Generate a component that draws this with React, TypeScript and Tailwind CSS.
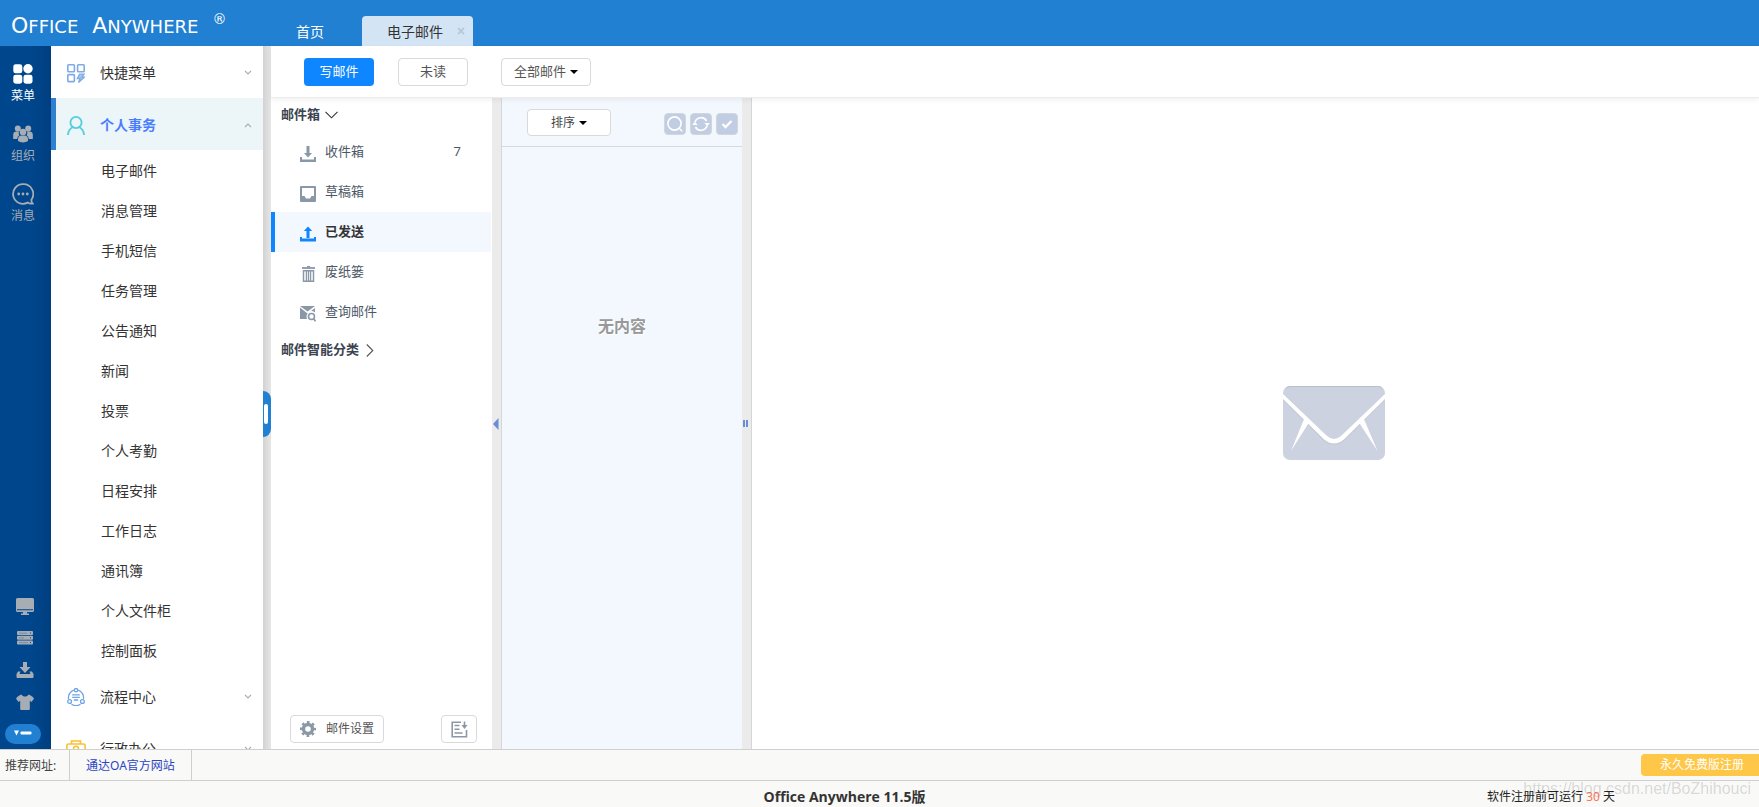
import type { ReactNode } from "react";
import clsx from "clsx";

const SUB_MENU = [
  "电子邮件",
  "消息管理",
  "手机短信",
  "任务管理",
  "公告通知",
  "新闻",
  "投票",
  "个人考勤",
  "日程安排",
  "工作日志",
  "通讯簿",
  "个人文件柜",
  "控制面板",
];

/* ---------- icons ---------- */

function GridIcon() {
  return (
    <svg width="20" height="20" viewBox="0 0 20 20" fill="currentColor">
      <rect x="0.3" y="0.3" width="9" height="9" rx="2.4" />
      <circle cx="15" cy="4.8" r="4.7" />
      <rect x="0.3" y="10.7" width="9" height="9" rx="2.4" />
      <rect x="10.5" y="10.7" width="9" height="9" rx="2.4" />
    </svg>
  );
}

function PeopleIcon() {
  return (
    <svg width="20" height="18" viewBox="0 0 20 18" fill="currentColor">
      <circle cx="4.8" cy="3.6" r="3" />
      <circle cx="15.2" cy="3.6" r="3" />
      <path d="M0.2 14V9.600C0.2 7.800 1.600 6.600 3.400 6.600H6c-.6 1.300-.3 2.600.4 3.600C5 11 4.400 12 4.300 14z" />
      <path d="M19.800 14V9.600C19.800 7.800 18.400 6.600 16.600 6.600H14c.6 1.300.3 2.600-.4 3.600 1.400.8 2 1.800 2.100 3.800z" />
      <circle cx="10" cy="7" r="3.300" />
      <path d="M5 16v-1.800c0-2.200 1.600-3.600 3.400-3.600h3.200c1.800 0 3.400 1.400 3.400 3.600V16c-2.600 1.900-7.400 1.900-10 0z" />
    </svg>
  );
}

function ChatIcon() {
  return (
    <svg width="22" height="22" viewBox="0 0 22 22" fill="none" stroke="currentColor" strokeWidth="1.800">
      <path d="M11 1.200a9.800 9.800 0 1 0 4.600 18.400c1.400.9 3.200 1.200 5 .9-.9-1-1.300-2.200-1.200-3.800A9.800 9.800 0 0 0 11 1.200z" />
      <g fill="currentColor" stroke="none">
        <circle cx="6.700" cy="11" r="1.400" />
        <circle cx="11" cy="11" r="1.400" />
        <circle cx="15.300" cy="11" r="1.400" />
      </g>
    </svg>
  );
}

function DesktopIcon() {
  return (
    <svg width="18" height="17" viewBox="0 0 18 17" fill="currentColor">
      <path fillRule="evenodd" d="M1.500 0h15A1.500 1.500 0 0 1 18 1.500v11a1.500 1.500 0 0 1-1.500 1.500h-15A1.500 1.500 0 0 1 0 12.500v-11A1.500 1.500 0 0 1 1.500 0zM1 11.300v1h16v-1z" />
      <path d="M7 14h4v1.500h2V17H5v-1.500h2z" />
    </svg>
  );
}

function ServerIcon() {
  return (
    <svg width="16" height="14" viewBox="0 0 16 14">
      <g fill="currentColor">
        <rect width="16" height="4" rx="1" />
        <rect y="4.800" width="16" height="4" rx="1" />
        <rect y="9.600" width="16" height="4" rx="1" />
      </g>
      <path d="M2 2.200h8M2 6.900h5M2 11.700h9" stroke="#00458a" strokeWidth="0.600" opacity="0.500" />
      <path d="M13 2h1M13 6.800h1M13 11.600h1" stroke="#00458a" strokeWidth="1" />
    </svg>
  );
}

function TrayDownIcon() {
  return (
    <svg width="18" height="16" viewBox="0 0 18 16" fill="currentColor">
      <path d="M7 0h4v5h3.500L9 11 3.500 5H7z" />
      <path d="M0.500 12L2 9.500h2.500L3.500 12h11l-1-2.500H16l1.500 2.500V15a1 1 0 0 1-1 1h-15a1 1 0 0 1-1-1z" />
    </svg>
  );
}

function ShirtIcon() {
  return (
    <svg width="18" height="16" viewBox="0 0 18 16" fill="currentColor">
      <path d="M5.500 0.500C6.300 2 7.500 2.600 9 2.600s2.700-.6 3.500-2.100c1.700.3 3.500 1.500 5.500 4L15.600 8l-1.800-1.300V15a1 1 0 0 1-1 1H5.200a1 1 0 0 1-1-1V6.700L2.400 8 0 4.500c2-2.500 3.800-3.700 5.500-4z" />
    </svg>
  );
}

function QuickMenuIcon() {
  return (
    <svg width="18" height="19" viewBox="0 0 18 19" fill="none" stroke="#7fabe3" strokeWidth="1.600">
      <rect x="0.800" y="0.800" width="6.600" height="7" rx="0.800" />
      <rect x="10.600" y="0.800" width="6.600" height="7" rx="0.800" />
      <rect x="0.800" y="10.600" width="6.600" height="7" rx="0.800" />
      <path d="M12.500 10.200l-2.200 4.300h2.800l-1.600 4 6-5.400h-2.600l2.200-2.900z" fill="#a9c8ef" strokeWidth="1.300" />
    </svg>
  );
}

function PersonIcon() {
  return (
    <svg width="18" height="19" viewBox="0 0 18 19" fill="none" stroke="#55cddd" strokeWidth="1.800">
      <circle cx="9" cy="6.500" r="5.600" />
      <path d="M0.900 19c.3-4 2.300-6.800 5.500-8M17.100 19c-.3-4-2.300-6.800-5.500-8" />
    </svg>
  );
}

function FlowIcon() {
  return (
    <svg width="18" height="18" viewBox="0 0 18 18" fill="none" stroke="#6fa3e3" strokeWidth="1.300">
      <path d="M6.800 2.200A7.600 7.600 0 0 0 1.600 11M11.200 2.200A7.600 7.600 0 0 1 16.400 11M4.500 16.200a8.500 8.500 0 0 0 9 0" />
      <circle cx="9" cy="2.200" r="1.700" />
      <circle cx="2.600" cy="13.500" r="1.900" />
      <circle cx="15.400" cy="13.500" r="1.900" />
      <path d="M5.200 6.800h7.600M5.200 9.300h7.600M6.800 12h4.400" />
    </svg>
  );
}

function CaseIcon() {
  return (
    <svg width="20" height="18" viewBox="0 0 20 18" fill="none" stroke="#fcc02f" strokeWidth="1.600">
      <rect x="0.900" y="4" width="18.200" height="13" rx="1.500" />
      <path d="M5.500 4V1h9v3" />
      <circle cx="10" cy="8.600" r="2.400" />
    </svg>
  );
}

function InboxDownIcon() {
  return (
    <svg width="16" height="16" viewBox="0 0 16 16" fill="currentColor">
      <path d="M6.500 0h3v7h2.500l-4 4.500L4 7h2.500z" />
      <path d="M0 11h2v2.500h12V11h2v5H0z" />
    </svg>
  );
}

function DraftIcon() {
  return (
    <svg width="16" height="16" viewBox="0 0 16 16" fill="currentColor">
      <path fillRule="evenodd" d="M1 0h14a1 1 0 0 1 1 1v14a1 1 0 0 1-1 1H1a1 1 0 0 1-1-1V1a1 1 0 0 1 1-1zM2 2v8h2.500l1.500 2.500h4L11.500 10H14V2z" />
    </svg>
  );
}

function SentIcon() {
  return (
    <svg width="16" height="16" viewBox="0 0 16 16" fill="currentColor">
      <path d="M8 0.500L12.200 5H9.500v7h-3V5H3.800z" />
      <path d="M0 11h2v1.500h12V11h2v4.500H0z" />
    </svg>
  );
}

function TrashIcon() {
  return (
    <svg width="16" height="16" viewBox="0 0 16 16" fill="none" stroke="currentColor">
      <path d="M2 2h13" strokeWidth="1.800" />
      <path d="M7 0.700h3" strokeWidth="1.400" />
      <path d="M3.500 4.800h10v10.500h-10zM6.500 4.500v11M10.500 4.500v11" strokeWidth="1.500" />
      <path d="M8.500 4.500v11" strokeWidth="1" />
    </svg>
  );
}

function SearchMailIcon() {
  return (
    <svg width="16" height="16" viewBox="0 0 16 16" fill="currentColor">
      <path d="M0 0h15L7.500 5.500z" />
      <path d="M0 1.500L7.500 7.500 9 6.600A5.200 5.200 0 0 0 7 13H0z" />
      <path d="M15 2v4.400a5 5 0 0 0-3-1.400L11 5z" />
      <circle cx="11.500" cy="10.500" r="3" fill="none" stroke="currentColor" strokeWidth="1.600" />
      <path d="M13.600 12.800l2 2.500" stroke="currentColor" strokeWidth="1.700" />
    </svg>
  );
}

function GearIcon() {
  return (
    <svg width="16" height="16" viewBox="0 0 16 16" fill="none" stroke="#8a97a6">
      <circle cx="8" cy="8" r="4.500" strokeWidth="3.400" />
      <circle cx="8" cy="8" r="6.900" strokeWidth="2.200" strokeDasharray="2.710 2.710" strokeDashoffset="1.350" />
    </svg>
  );
}

function ExportIcon() {
  return (
    <svg width="17" height="17" viewBox="0 0 17 17" fill="none" stroke="#8a97a6" strokeWidth="1.600">
      <path d="M10 1.200H1.200v14.600h14.300V9" />
      <path d="M3.500 4.500h5M3.500 8.200h5M3.500 12h8" strokeWidth="1.400" />
      <path d="M13.500 0.500v5" />
      <path d="M10.500 4h6l-3 4z" fill="#8a97a6" stroke="none" />
    </svg>
  );
}

function EnvelopeIcon() {
  return (
    <svg width="102" height="74" viewBox="0 0 102 74">
      <rect width="102" height="74" rx="7" fill="#ccd2df" />
      <path d="M3 2.500Q4.500 .5 7 .5h88q2.500 0 4 2" fill="none" stroke="#b8bfcf" />
      <path d="M0 9l43 42q8 8 16 0L102 9v5L62 54q-11 9-22 0L0 14z" fill="#b9c0cf" opacity="0.600" />
      <path d="M0 8l43.500 41.500q7.500 7 15 0L102 8v5L61.500 53q-10.500 9-21 0L0 13z" fill="#fff" />
      <path d="M21.500 32l4.500 4.500L8 65zM80.500 32L76 36.500 94.500 65z" fill="#fff" />
    </svg>
  );
}

function Chevron({ up }: { up?: boolean }) {
  return (
    <svg width="8" height="6" viewBox="0 0 8 6" fill="none" stroke="#a9adb3" strokeWidth="1.100">
      <path d={up ? "M1 5l3-3 3 3" : "M1 1l3 3 3-3"} />
    </svg>
  );
}

function Caret() {
  return (
    <svg width="8" height="4" viewBox="0 0 8 4" fill="#000">
      <path d="M0 0h8L4 4z" />
    </svg>
  );
}

/* ---------- layout parts ---------- */

function RailItem({ icon, label, active }: { icon: ReactNode; label: string; active?: boolean }) {
  return (
    <button type="button" className={clsx("flex w-full flex-col items-center", active ? "text-white" : "text-[#a7adb5]")}>
      <span className="flex h-6 items-center">{icon}</span>
      <span className="text-xs leading-5">{label}</span>
    </button>
  );
}

function Rail() {
  return (
    <nav className="flex w-[51px] shrink-0 flex-col bg-linear-to-r from-[#00468c] from-60% to-[#003f80] pr-[5px]">
      <div className="flex flex-col gap-4 pt-4">
        <RailItem icon={<GridIcon />} label="菜单" active />
        <RailItem icon={<PeopleIcon />} label="组织" />
        <RailItem icon={<ChatIcon />} label="消息" />
      </div>
      <div className="mt-auto flex flex-col items-center pb-[5px] text-[#a7adb5]">
        <div className="flex flex-col pl-1">
          <button type="button" aria-label="桌面" className="flex h-8 items-center justify-center"><DesktopIcon /></button>
          <button type="button" aria-label="服务" className="flex h-8 items-center justify-center"><ServerIcon /></button>
          <button type="button" aria-label="下载" className="flex h-8 items-center justify-center"><TrayDownIcon /></button>
          <button type="button" aria-label="皮肤" className="flex h-8 items-center justify-center"><ShirtIcon /></button>
        </div>
        <button type="button" aria-label="收起" className="mt-1.5 flex h-5 w-9 items-center justify-center rounded-full bg-[#2180d2] pb-0.5">
          <svg width="18" height="6" viewBox="0 0 18 6" fill="#fff">
            <path d="M0 0.500h5L2.500 5.500z" />
            <rect x="6.500" y="1.500" width="11" height="3" rx="1" />
          </svg>
        </button>
      </div>
    </nav>
  );
}

function GroupRow({ icon, label, open }: { icon: ReactNode; label: string; open?: boolean }) {
  return (
    <button
      type="button"
      className={clsx(
        "flex h-[52px] w-full shrink-0 items-center border-l-[5px] pt-0.5 pr-[11px] pl-[10px] text-left text-sm",
        open ? "border-[#2f80d0] bg-[#ecf5f8] font-bold text-[#4a7dff]" : "border-transparent text-[#333]",
      )}
    >
      <span className="flex w-5 justify-center">{icon}</span>
      <span className="ml-[14px] flex-1">{label}</span>
      <Chevron up={open} />
    </button>
  );
}

function SideMenu() {
  return (
    <aside className="flex w-[212px] shrink-0 flex-col overflow-hidden bg-white">
      <GroupRow icon={<QuickMenuIcon />} label="快捷菜单" />
      <GroupRow icon={<PersonIcon />} label="个人事务" open />
      <ul className="shrink-0">
        {SUB_MENU.map((item) => (
          <li key={item}>
            <a href="#" className="flex h-10 items-center pt-0.5 pl-[50px] text-sm text-[#333]">{item}</a>
          </li>
        ))}
      </ul>
      <GroupRow icon={<FlowIcon />} label="流程中心" />
      <GroupRow icon={<CaseIcon />} label="行政办公" />
    </aside>
  );
}

type FolderProps = { icon: ReactNode; label: string; count?: number; active?: boolean };

function Folder({ icon, label, count, active }: FolderProps) {
  return (
    <li>
      <a
        href="#"
        className={clsx(
          "mr-px flex h-10 items-center border-l-4 pr-[30px] pl-[25px] text-[13px]",
          active ? "border-[#0e86ff] bg-[#f3f8ff] font-bold text-[#333]" : "border-transparent text-[#4d5866]",
        )}
      >
        <span className={clsx("pt-1", active ? "text-[#0e86ff]" : "text-[#8a97a6]")}>{icon}</span>
        <span className="ml-[9px] flex-1">{label}</span>
        {count !== undefined && <span>{count}</span>}
      </a>
    </li>
  );
}

function MailFolders() {
  return (
    <section className="flex w-[221px] shrink-0 flex-col bg-white">
      <button type="button" className="flex h-[34px] items-center gap-[5px] pl-[10px] text-[13px] font-bold text-[#3c4350]">
        邮件箱
        <svg width="13" height="8" viewBox="0 0 13 8" fill="none" stroke="#333" strokeWidth="1.100">
          <path d="M0.500 0.800l6 6 6-6" />
        </svg>
      </button>
      <ul>
        <Folder icon={<InboxDownIcon />} label="收件箱" count={7} />
        <Folder icon={<DraftIcon />} label="草稿箱" />
        <Folder icon={<SentIcon />} label="已发送" active />
        <Folder icon={<TrashIcon />} label="废纸篓" />
        <Folder icon={<SearchMailIcon />} label="查询邮件" />
      </ul>
      <button type="button" className="flex h-9 items-center gap-[7px] pl-[10px] text-[13px] font-bold text-[#3c4350]">
        邮件智能分类
        <svg width="8" height="13" viewBox="0 0 8 13" fill="none" stroke="#555" strokeWidth="1.100">
          <path d="M0.800 0.500l6 6-6 6" />
        </svg>
      </button>
      <div className="mt-auto flex justify-between pr-[15px] pb-1.5 pl-[19px]">
        <button type="button" className="flex h-7 items-center gap-[10px] rounded border border-[#d9d9d9] px-[9px] text-xs text-[#555]">
          <GearIcon />
          邮件设置
        </button>
        <button type="button" aria-label="导出" className="flex h-7 w-9 items-center justify-center rounded border border-[#d9d9d9]">
          <ExportIcon />
        </button>
      </div>
    </section>
  );
}

function Splitter({ children }: { children: ReactNode }) {
  return (
    <div className="flex w-[10px] shrink-0 items-center border-r border-[#d6d6d6] bg-[#ebebeb] pl-px">{children}</div>
  );
}

function ListAction({ label, children }: { label: string; children: ReactNode }) {
  return (
    <button
      type="button"
      aria-label={label}
      className="flex h-[22px] w-[22px] items-center justify-center rounded border border-[#d3d7dc] bg-[#c1cde3]"
    >
      <svg width="18" height="18" viewBox="0 0 18 18" fill="none" stroke="#fff" strokeWidth="1.600" className="shrink-0">
        {children}
      </svg>
    </button>
  );
}

function MailList() {
  return (
    <section className="flex w-60 shrink-0 flex-col bg-[#f3f8ff]">
      <div className="flex h-[49px] items-start justify-between border-b border-[#d6d9dd] pt-[11px] pr-1 pl-[25px]">
        <button type="button" className="flex h-[27px] w-[84px] items-center justify-center gap-1 rounded border border-[#d9d9d9] bg-white text-xs text-[#444]">
          排序
          <Caret />
        </button>
        <div className="flex gap-1 pt-1">
          <ListAction label="搜索">
            <circle cx="8.500" cy="8.500" r="6.600" />
            <path d="M13.200 13.200l3 3" />
          </ListAction>
          <ListAction label="刷新">
            <path d="M3 7.200A6.300 6.300 0 0 1 14.600 6M15 10.800A6.300 6.300 0 0 1 3.400 12" />
            <path d="M12.200 8h5.600L15.400 11.200zM0.200 10h5.600L2.800 6.800z" fill="#fff" stroke="none" />
          </ListAction>
          <ListAction label="全选">
            <path d="M4.500 9l3 3 6-6" strokeWidth="2.400" />
          </ListAction>
        </div>
      </div>
      <p className="pt-[167px] text-center text-base font-bold text-[#999] text-shadow-[1px_1px_0_#fff]">无内容</p>
    </section>
  );
}

function MailApp() {
  return (
    <main className="flex min-w-0 flex-1 flex-col bg-white">
      <div className="z-10 flex h-[52px] shrink-0 items-start border-b border-[#ececec] pt-3 pl-[33px] text-[13px] shadow-[0_2px_5px_rgba(0,0,0,0.06)]">
        <button type="button" className="h-7 w-[70px] rounded bg-[#0e86ff] text-white">写邮件</button>
        <button type="button" className="ml-6 h-7 w-[70px] rounded border border-[#d9d9d9] text-[#555]">未读</button>
        <button type="button" className="ml-[33px] flex h-7 w-[90px] items-center justify-center gap-1 rounded border border-[#d9d9d9] text-[#555]">
          全部邮件
          <Caret />
        </button>
      </div>
      <div className="flex min-h-0 flex-1">
        <MailFolders />
        <Splitter>
          <svg width="6" height="12" viewBox="0 0 6 12" fill="#6a8ed6"><path d="M5.500 0v12L0 6z" /></svg>
        </Splitter>
        <MailList />
        <Splitter>
          <svg width="5" height="7" viewBox="0 0 5 7" fill="#6a8ed6"><path d="M0 0h2v7H0zM3 0h2v7H3z" /></svg>
        </Splitter>
        <section className="flex flex-1 items-center justify-center pb-0.5 pl-[156px]">
          <EnvelopeIcon />
        </section>
      </div>
    </main>
  );
}

function Header() {
  return (
    <header className="flex h-[46px] shrink-0 bg-[#2180d2] text-sm">
      <div className="flex w-[271px] items-center gap-[14px] pl-[11px] font-['DejaVu_Sans'] text-lg leading-none text-white">
        <span className="pt-1.5"><span className="text-[22px] leading-none">O</span>FFICE</span>
        <span className="pt-1.5"><span className="text-[22px] leading-none">A</span>NYWHERE</span>
        <span className="self-start pt-3 text-sm leading-none">®</span>
      </div>
      <nav className="flex items-end">
        <a href="#" className="flex h-[30px] w-[91px] items-center pt-0.5 pl-[25px] text-white">首页</a>
        <div className="flex h-[30px] w-[111px] items-center justify-between rounded-t bg-[#d3e5f5] pr-2 pl-[25px] text-[#333]">
          <a href="#" className="pt-0.5">电子邮件</a>
          <button type="button" aria-label="关闭">
            <svg width="8" height="8" viewBox="0 0 8 8" stroke="#b9c9d6" strokeWidth="1.800"><path d="M1 1l6 6M7 1L1 7" /></svg>
          </button>
        </div>
      </nav>
    </header>
  );
}

function Footer() {
  return (
    <footer className="relative shrink-0 bg-[#f9f9f7] text-xs text-[#444]">
      <div className="flex h-[31px] items-stretch border-t border-[#cfcfcf]">
        <span className="flex w-[69px] items-center pt-0.5 pl-[5px]">推荐网址:</span>
        <a href="#" className="flex items-center border-x border-[#cfcfcf] px-4 pt-0.5 text-[#2b44c4]">通达OA官方网站</a>
        <button type="button" className="my-1 ml-auto w-[118px] rounded-l bg-[#ffc748] pl-1 text-white">永久免费版注册</button>
      </div>
      <div className="flex h-[27px] items-center border-t border-[#cfcfcf] pt-1.5 pr-36">
        <strong className="flex-1 pl-[202px] text-center font-['Open_Sans','Noto_Sans_CJK_SC',sans-serif] text-sm text-[#333]">
          Office Anywhere 11.5版
        </strong>
        <span className="text-[#222]">
          软件注册前可运行 <span className="text-[#ff7256]">30</span> 天
        </span>
      </div>
      <span className="pointer-events-none absolute right-2 bottom-1.5 font-['Liberation_Sans'] text-base leading-6 text-black/15">
        https://blog.csdn.net/BoZhihouci
      </span>
    </footer>
  );
}

export default function App() {
  return (
    <div className="flex h-screen flex-col overflow-hidden font-['Noto_Sans','Noto_Sans_CJK_SC',sans-serif]">
      <Header />
      <div className="flex min-h-0 flex-1">
        <Rail />
        <SideMenu />
        <div className="relative w-2 shrink-0 bg-linear-to-r from-[#d2d2d2] to-[#e6e6e6]">
          <button type="button" aria-label="折叠菜单" className="absolute inset-x-0 top-[345px] flex h-[46px] items-center rounded-r-lg bg-[#2180d2] pl-px">
            <span className="h-5 w-1 rounded-xs bg-white" />
          </button>
        </div>
        <MailApp />
      </div>
      <Footer />
    </div>
  );
}
